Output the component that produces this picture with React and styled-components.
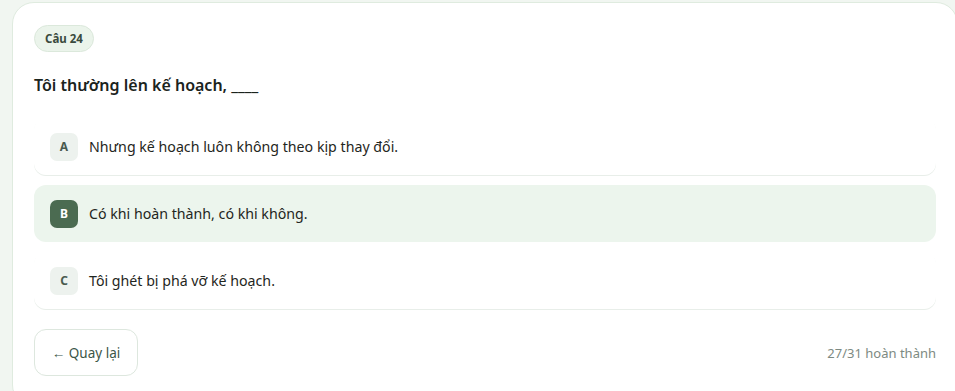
import styled, { createGlobalStyle } from 'styled-components';

const GlobalStyle = createGlobalStyle`
	html, body {
		margin: 0;
		padding: 0;
		background: #f1f6f1;
		overflow: hidden;
	}
	body {
		font-family: 'Noto Sans', 'Open Sans', sans-serif;
		color: #1f2a22;
	}
`;

const options = [
	{ key: 'A', text: 'Nhưng kế hoạch luôn không theo kịp thay đổi.' },
	{ key: 'B', text: 'Có khi hoàn thành, có khi không.' },
	{ key: 'C', text: 'Tôi ghét bị phá vỡ kế hoạch.' },
];

export default function App() {
	const selected = 'B';
	return (
		<>
			<GlobalStyle />
			<Page>
				<Card>
					<Badge>Câu 24</Badge>
					<Question>Tôi thường lên kế hoạch, ____</Question>
					<OptionList>
						{options.map((o) => (
							<Option key={o.key} $active={o.key === selected}>
								<Letter $active={o.key === selected}>{o.key}</Letter>
								<OptionText>{o.text}</OptionText>
							</Option>
						))}
					</OptionList>
					<Footer>
						<BackButton>← Quay lại</BackButton>
						<Progress>27/31 hoàn thành</Progress>
					</Footer>
				</Card>
			</Page>
		</>
	);
}

const Page = styled.div`
	width: 955px;
	height: 391px;
	overflow: hidden;
	padding: 2px 0 0 12px;
	box-sizing: border-box;
`;

const Card = styled.div`
	width: 946px;
	box-sizing: border-box;
	background: #ffffff;
	border: 1px solid #dfebdf;
	border-radius: 22px;
	padding: 22px 21px 30px;
`;

const Badge = styled.span`
	display: inline-flex;
	align-items: center;
	height: 27px;
	padding: 0 10px;
	box-sizing: border-box;
	border-radius: 14px;
	background: #ebf4eb;
	border: 1px solid #dbe8db;
	font-size: 11.5px;
	font-weight: 700;
	color: #3a4b3e;
`;

const Question = styled.h2`
	margin: 21px 0 21px;
	font-size: 16px;
	font-weight: 600;
	line-height: 24px;
	color: #1b241d;
`;

const OptionList = styled.div`
	display: flex;
	flex-direction: column;
	gap: 10px;
`;

const Option = styled.div`
	display: flex;
	align-items: center;
	gap: 11px;
	height: 57px;
	padding: 0 16px;
	box-sizing: border-box;
	border-radius: 12px;
	background: ${({ $active }) => ($active ? '#ecf5ed' : '#ffffff')};
	box-shadow: ${({ $active }) => ($active ? 'none' : '0 1px 0 #e8eee9')};
`;

const Letter = styled.span`
	display: flex;
	align-items: center;
	justify-content: center;
	width: 28px;
	height: 28px;
	border-radius: 7px;
	flex-shrink: 0;
	font-size: 12px;
	font-weight: 700;
	background: ${({ $active }) => ($active ? '#4b6b51' : '#edf2ee')};
	color: ${({ $active }) => ($active ? '#ffffff' : '#4a5a4e')};
`;

const OptionText = styled.span`
	font-size: 14.2px;
	color: #1f2621;
`;

const Footer = styled.div`
	display: flex;
	align-items: center;
	justify-content: space-between;
	margin-top: 20px;
`;

const BackButton = styled.button`
	height: 47px;
	width: 104px;
	border-radius: 12px;
	border: 1px solid #dde7de;
	background: #ffffff;
	font-family: inherit;
	font-size: 13.5px;
	color: #3c5648;
	cursor: pointer;
`;

const Progress = styled.span`
	font-size: 13px;
	color: #7d8a82;
`;
